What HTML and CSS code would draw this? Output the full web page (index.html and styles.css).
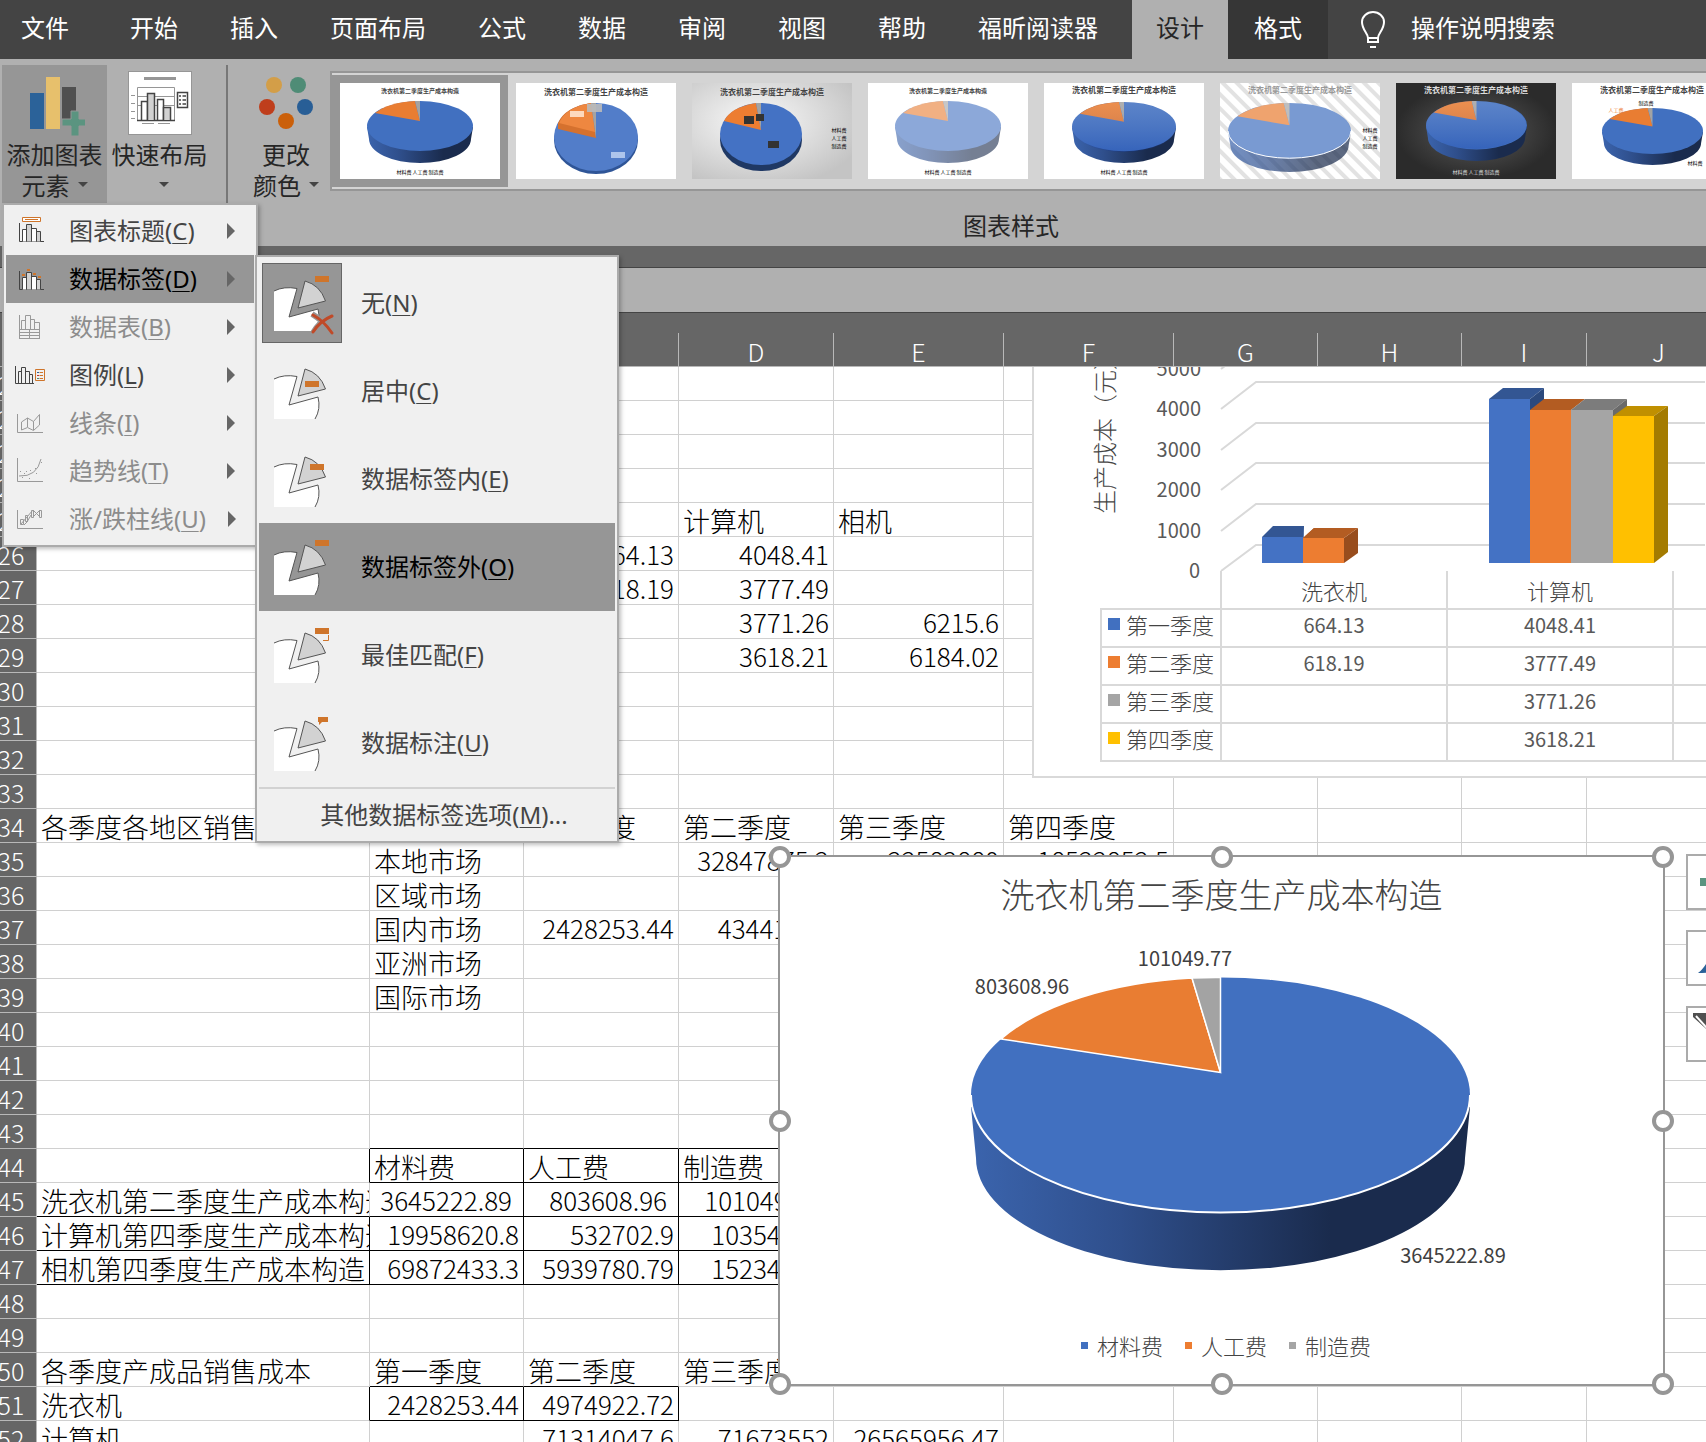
FILE: index.html
```html
<!DOCTYPE html>
<html lang="zh-CN">
<head>
<meta charset="utf-8">
<title>生产成本 - 图表设计</title>
<link rel="stylesheet" href="styles.css">
</head>
<body>
<svg class="defs" aria-hidden="true">
  <defs>
    <linearGradient id="wall"><stop offset="0" stop-color="#3b64ad"/><stop offset=".3" stop-color="#2f4f8c"/><stop offset=".72" stop-color="#1a2b4d"/><stop offset="1" stop-color="#1a2b4d"/></linearGradient>
    <linearGradient id="shade" x2="0" y2="1"><stop offset="0" stop-color="#fff" stop-opacity=".14"/><stop offset="1" stop-color="#0028a0" stop-opacity=".18"/></linearGradient>
    <radialGradient id="dark"><stop offset="0" stop-color="#5c5c5c"/><stop offset="1" stop-color="#2b2b2b"/></radialGradient>
    <radialGradient id="light" cx=".4" cy=".4" r=".7"><stop offset="0" stop-color="#fafafa"/><stop offset="1" stop-color="#c4c4c4"/></radialGradient>
    <pattern id="stripe" width="10" height="10" patternUnits="userSpaceOnUse" patternTransform="rotate(-45)"><rect width="10" height="10" fill="#fff"/><rect width="4" height="10" fill="#e2e2e2"/></pattern>
    <symbol id="pie" viewBox="0 0 106 62" preserveAspectRatio="none">
      <path d="M0 26 2 38A51 24 0 0 0 104 38L106 26Z" fill="url(#wall)"/>
      <ellipse cx="53" cy="25" rx="53" ry="25" fill="#4170c0"/>
      <path d="M53 20 8 12A53 25 0 0 1 48 0Z" fill="#e97d32"/>
      <path d="M53 20 48 0H53Z" fill="#a3a3a3"/>
    </symbol>
    <symbol id="bars" viewBox="0 0 32 32">
      <path d="M4.5 8V26.5H29" fill="none" stroke="currentColor"/>
      <g stroke="currentColor"><path d="M7.500 26.500V14.500H11.500V26.500M16.500 26.500V13.500H21.500V26.500" fill="#fff"/><path d="M11.500 26.500V9.500H16.500V26.500M21.500 26.500V16.500H25.500V26.500" fill="#d2d2d2"/></g>
    </symbol>
    <symbol id="slices" viewBox="0 0 64 64">
      <path d="M4 20Q14 15 27 17.500L19 46 48 38Q51 50 45 60H4Z" fill="#fff"/>
      <path d="M4 20Q14 15 27 17.500L19 46 48 38Q51 50 45 60" fill="none" stroke="#555"/>
      <path d="M35 10Q50 14 55.500 30L28 37Z" fill="#d2d2d2" stroke="#555"/>
    </symbol>
  </defs>
</svg>
<div class="app">
  <nav class="tabs">
    <button class="tab tab-file">文件</button><button class="tab">开始</button><button class="tab">插入</button><button class="tab">页面布局</button><button class="tab">公式</button><button class="tab">数据</button><button class="tab">审阅</button><button class="tab">视图</button><button class="tab">帮助</button><button class="tab">福昕阅读器</button><button class="tab tab-active">设计</button><button class="tab tab-context">格式</button>
    <button class="tell"><svg width="24" height="38" viewBox="0 0 24 38" fill="none" stroke="#fff" stroke-width="2"><path d="M7 31V27C7 22 1 19 1 11A11 10 0 0 1 23 11C23 19 17 22 17 27V31ZM7 27H17M9 36H15"/></svg><span>操作说明搜索</span></button>
  </nav>

  <section class="ribbon">
    <div class="group">
      <button class="tool tool-open">
        <svg width="60" height="68" viewBox="0 0 60 68"><path d="M5 22H19V58H5Z" fill="#2b6299"/><path d="M21 6H35V58H21Z" fill="#e7c06c"/><path d="M37 16H51V48H37Z" fill="#505050"/><path d="M37 48H46V40H54V48H62V55H54V65H46V55H37Z" fill="#5b9480" stroke="#969696"/></svg>
        <span>添加图表</span><span class="drop">元素<i class="caret"></i></span>
      </button>
      <button class="tool">
        <svg width="64" height="68" viewBox="0 0 64 68"><rect x=".5" y=".5" width="63" height="63" fill="#fff" stroke="#969696"/><path d="M16 7.500H48" stroke="#969696" stroke-width="3"/><path d="M9.500 16.500H46.500V49M9.500 16.500V49M3 24.500H7M3 32.500H7M3 40.500H7M3 47.500H7M9.500 25.500H46M9.500 34.500H46M14 52.500H26M30 52.500H42" stroke="#969696" fill="none"/><path d="M9 49.500H47M13.500 49V30.500H19.500V49M29.500 49V28.500H35.500V49" fill="#fff" stroke="#444" stroke-width="1.500"/><path d="M19.500 49V22.500H26.500V49M35.500 49V36.500H42.500V49" fill="#d2d2d2" stroke="#444" stroke-width="1.500"/><path d="M49.500 21.500H59.500V36.500H49.500Z" fill="#fff" stroke="#444" stroke-width="1.500"/><path d="M51 25H53M54.500 25H58M51 29H53M54.500 29H58M51 33H53M54.500 33H58" stroke="#444" stroke-width="1.500"/></svg>
        <span>快速布局</span><span class="drop"><i></i><i class="caret"></i></span>
      </button>
    </div>
    <div class="group group-color">
      <button class="tool">
        <svg width="64" height="68" viewBox="0 0 64 68"><circle cx="20" cy="14" r="8" fill="#d39e48"/><circle cx="44" cy="14" r="8" fill="#4f8c76"/><circle cx="13" cy="36" r="8" fill="#bf3e1c"/><circle cx="51" cy="36" r="8" fill="#285e96"/><circle cx="32" cy="50" r="8" fill="#cb600a"/></svg>
        <span>更改</span><span class="drop">颜色<i class="caret"></i></span>
      </button>
    </div>
    <div class="styles">
      <div class="gallery">
        <button class="thumb thumb-on" aria-label="样式 1"><svg width="160" height="96"><rect width="160" height="96" fill="#fff"/><text x="80" y="10" class="cap cap-s">洗衣机第二季度生产成本构造</text><use href="#pie" x="27" y="18" width="106" height="62"/><text x="80" y="91" class="key">材料费 人工费 制造费</text></svg></button>
        <button class="thumb" aria-label="样式 2"><svg width="160" height="96"><rect width="160" height="96" fill="#fff"/><text x="80" y="12" class="cap">洗衣机第二季度生产成本构造</text><ellipse cx="80" cy="57" rx="42" ry="34" fill="#2f5597"/><ellipse cx="80" cy="54" rx="42" ry="34" fill="#527dc9"/><path d="M80 55 42 46V40Q49 24 75 20Z" fill="#d5712e"/><path d="M79 49 43 40Q50 24 75 20Z" fill="#ee8740"/><path d="M80 55 75 20H80Z" fill="#a3a3a3"/><g class="tag"><rect x="54" y="28" width="14" height="6" fill="#ffe2cc"/><rect x="71" y="21" width="15" height="8" fill="#bbb"/><rect x="95" y="69" width="14" height="6" fill="#b9cdf0"/></g></svg></button>
        <button class="thumb" aria-label="样式 3"><svg width="160" height="96"><rect width="160" height="96" fill="url(#light)"/><text x="80" y="12" class="cap">洗衣机第二季度生产成本构造</text><ellipse cx="69" cy="57" rx="41" ry="31" fill="#1f3864"/><ellipse cx="69" cy="51" rx="41" ry="31" fill="#4472c4"/><path d="M69 47 32 38Q39 24 64 20Z" fill="#ed7d31"/><path d="M69 47 64 20H69Z" fill="#a3a3a3"/><path d="M52 33H62V41H52ZM64 31H72V38H64ZM76 58H87V65H76Z" fill="#333"/><text x="147" y="49" class="key">材料费</text><text x="147" y="57" class="key">人工费</text><text x="147" y="65" class="key">制造费</text></svg></button>
        <button class="thumb" aria-label="样式 4"><svg width="160" height="96"><rect width="160" height="96" fill="#fff"/><text x="80" y="10" class="cap cap-s">洗衣机第二季度生产成本构造</text><use href="#pie" x="27" y="18" width="106" height="62" opacity=".6"/><text x="80" y="91" class="key">材料费 人工费 制造费</text></svg></button>
        <button class="thumb" aria-label="样式 5"><svg width="160" height="96"><rect width="160" height="96" fill="#fff"/><text x="80" y="10" class="cap">洗衣机第二季度生产成本构造</text><use href="#pie" x="28" y="19" width="104" height="61"/><ellipse cx="80" cy="44" rx="52" ry="25" fill="url(#shade)"/><text x="80" y="91" class="key">材料费 人工费 制造费</text></svg></button>
        <button class="thumb" aria-label="样式 6"><svg width="160" height="96"><rect width="160" height="96" fill="url(#stripe)"/><text x="80" y="10" class="cap cap-g">洗衣机第二季度生产成本构造</text><ellipse cx="69" cy="47" rx="61" ry="27" fill="#fff"/><use href="#pie" x="8" y="20" width="123" height="69" opacity=".7"/><path d="M8 48A61 27 0 0 0 131 48" fill="none" stroke="#fff"/><text x="150" y="49" class="key">材料费</text><text x="150" y="57" class="key">人工费</text><text x="150" y="65" class="key">制造费</text></svg></button>
        <button class="thumb" aria-label="样式 7"><svg width="160" height="96"><rect width="160" height="96" fill="url(#dark)"/><text x="80" y="10" class="cap cap-w">洗衣机第二季度生产成本构造</text><use href="#pie" x="30" y="18" width="101" height="60"/><ellipse cx="80" cy="42" rx="50" ry="24" fill="url(#shade)"/><text x="80" y="91" class="key cap-w">材料费 人工费 制造费</text></svg></button>
        <button class="thumb" aria-label="样式 8"><svg width="160" height="96"><rect width="160" height="96" fill="#fff"/><text x="80" y="10" class="cap">洗衣机第二季度生产成本构造</text><text x="74" y="22" class="key">制造费</text><text x="44" y="29" class="key" fill="#ed7d31">人工费</text><use href="#pie" x="30" y="25" width="101" height="57"/><text x="123" y="82" class="key">材料费</text></svg></button>
      </div>
      <div class="group-name">图表样式</div>
    </div>
  </section>

  <div class="formula"></div>

  <main class="sheet">
    <table class="grid">
      <colgroup><col class="c-n"><col class="c-a"><col class="c-b"><col class="c-c"><col class="c-c"><col class="c-e"><col class="c-e"><col class="c-g"><col class="c-g"><col class="c-i"><col class="c-g"></colgroup>
      <thead><tr><th></th><th>A</th><th>B</th><th>C</th><th>D</th><th>E</th><th>F</th><th>G</th><th>H</th><th>I</th><th>J</th></tr></thead>
      <tbody>
      <tr><th>21</th><td></td><td></td><td></td><td></td><td></td><td></td><td></td><td></td><td></td><td></td></tr>
      <tr><th>22</th><td></td><td></td><td></td><td></td><td></td><td></td><td></td><td></td><td></td><td></td></tr>
      <tr><th>23</th><td></td><td></td><td></td><td></td><td></td><td></td><td></td><td></td><td></td><td></td></tr>
      <tr><th>24</th><td></td><td></td><td></td><td></td><td></td><td></td><td></td><td></td><td></td><td></td></tr>
      <tr><th>25</th><td></td><td></td><td>洗衣机</td><td>计算机</td><td>相机</td><td></td><td></td><td></td><td></td><td></td></tr>
      <tr><th>26</th><td></td><td></td><td class="n">664.13</td><td class="n">4048.41</td><td></td><td></td><td></td><td></td><td></td><td></td></tr>
      <tr><th>27</th><td></td><td></td><td class="n">618.19</td><td class="n">3777.49</td><td></td><td></td><td></td><td></td><td></td><td></td></tr>
      <tr><th>28</th><td></td><td></td><td></td><td class="n">3771.26</td><td class="n">6215.6</td><td></td><td></td><td></td><td></td><td></td></tr>
      <tr><th>29</th><td></td><td></td><td></td><td class="n">3618.21</td><td class="n">6184.02</td><td></td><td></td><td></td><td></td><td></td></tr>
      <tr><th>30</th><td></td><td></td><td></td><td></td><td></td><td></td><td></td><td></td><td></td><td></td></tr>
      <tr><th>31</th><td></td><td></td><td></td><td></td><td></td><td></td><td></td><td></td><td></td><td></td></tr>
      <tr><th>32</th><td></td><td></td><td></td><td></td><td></td><td></td><td></td><td></td><td></td><td></td></tr>
      <tr><th>33</th><td></td><td></td><td></td><td></td><td></td><td></td><td></td><td></td><td></td><td></td></tr>
      <tr><th>34</th><td>各季度各地区销售</td><td></td><td>第一季度</td><td>第二季度</td><td>第三季度</td><td>第四季度</td><td></td><td></td><td></td><td></td></tr>
      <tr><th>35</th><td></td><td>本地市场</td><td></td><td class="n">32847875.2</td><td class="n">22582880</td><td class="n">18522852.5</td><td></td><td></td><td></td><td></td></tr>
      <tr><th>36</th><td></td><td>区域市场</td><td></td><td></td><td></td><td></td><td></td><td></td><td></td><td></td></tr>
      <tr><th>37</th><td></td><td>国内市场</td><td class="n">2428253.44</td><td class="n">43441280</td><td></td><td></td><td></td><td></td><td></td><td></td></tr>
      <tr><th>38</th><td></td><td>亚洲市场</td><td></td><td></td><td></td><td></td><td></td><td></td><td></td><td></td></tr>
      <tr><th>39</th><td></td><td>国际市场</td><td></td><td></td><td></td><td></td><td></td><td></td><td></td><td></td></tr>
      <tr><th>40</th><td></td><td></td><td></td><td></td><td></td><td></td><td></td><td></td><td></td><td></td></tr>
      <tr><th>41</th><td></td><td></td><td></td><td></td><td></td><td></td><td></td><td></td><td></td><td></td></tr>
      <tr><th>42</th><td></td><td></td><td></td><td></td><td></td><td></td><td></td><td></td><td></td><td></td></tr>
      <tr><th>43</th><td></td><td class="kb"></td><td class="kb"></td><td class="kb"></td><td></td><td></td><td></td><td></td><td></td><td></td></tr>
      <tr><th>44</th><td class="kr"></td><td class="kb kr">材料费</td><td class="kb kr">人工费</td><td class="kb kr">制造费</td><td></td><td></td><td></td><td></td><td></td><td></td></tr>
      <tr><th>45</th><td class="kb">洗衣机第二季度生产成本构造</td><td class="n acc kb kr">3645222.89</td><td class="n acc kb kr">803608.96</td><td class="n acc kb kr">101049.77</td><td></td><td></td><td></td><td></td><td></td><td></td></tr>
      <tr><th>46</th><td class="kb kr">计算机第四季度生产成本构造</td><td class="n kb kr">19958620.8</td><td class="n kb kr">532702.9</td><td class="n kb kr">1035412.5</td><td></td><td></td><td></td><td></td><td></td><td></td></tr>
      <tr><th>47</th><td class="kb kr">相机第四季度生产成本构造</td><td class="n kb kr">69872433.3</td><td class="n kb kr">5939780.79</td><td class="n kb kr">1523418.6</td><td></td><td></td><td></td><td></td><td></td><td></td></tr>
      <tr><th>48</th><td></td><td></td><td></td><td></td><td></td><td></td><td></td><td></td><td></td><td></td></tr>
      <tr><th>49</th><td></td><td></td><td></td><td></td><td></td><td></td><td></td><td></td><td></td><td></td></tr>
      <tr><th>50</th><td>各季度产成品销售成本</td><td class="kb">第一季度</td><td class="kb">第二季度</td><td>第三季度</td><td></td><td></td><td></td><td></td><td></td><td></td></tr>
      <tr><th>51</th><td class="kr">洗衣机</td><td class="n kb kr">2428253.44</td><td class="n kb kr">4974922.72</td><td></td><td></td><td></td><td></td><td></td><td></td><td></td></tr>
      <tr><th>52</th><td>计算机</td><td></td><td class="n">71314047.6</td><td class="n">71673552</td><td class="n">26565956.47</td><td></td><td></td><td></td><td></td><td></td></tr>
      </tbody>
    </table>

    <figure class="chart chart-bar">
      <svg class="plot" width="671" height="204" viewBox="-1 1 671 204">
        <g fill="none" stroke="#d9d9d9" stroke-width="2"><path d="M186 3 190 0M186 43 221 16H680M186 84 221 57H680M186 124 221 97H680M186 165 221 138H680M186 205 221 179H680"/></g>
        <g class="axis"><text x="166" y="10">5000</text><text x="166" y="50">4000</text><text x="166" y="91">3000</text><text x="166" y="131">2000</text><text x="166" y="172">1000</text></g>
        <text class="axis-title" transform="rotate(-90 79 148)" x="79" y="148">生产成本（元）</text>
        <path d="M227 171 238 160H269L268 197H227Z" fill="#335693"/><path d="M227 171H268V197H227Z" fill="#4472c4"/>
        <path d="M268 172 279 162H310L309 172Z" fill="#b35c22"/><path d="M309 172 323 162V187L309 197Z" fill="#984d1d"/><path d="M279 162H323L309 172H268Z" fill="#b35c22"/><path d="M268 172H309V197H268Z" fill="#ed7d31"/>
        <path d="M454 33 468 22H509L495 33Z" fill="#335693"/><path d="M495 33 509 22V44H495Z" fill="#2b497d"/><path d="M454 33H495V197H454Z" fill="#4472c4"/>
        <path d="M495 44 509 33H550L536 44Z" fill="#b35c22"/><path d="M495 44H536V197H495Z" fill="#ed7d31"/>
        <path d="M536 44 550 33H592L578 44Z" fill="#7c7c7c"/><path d="M578 44 592 33V50H578Z" fill="#6a6a6a"/><path d="M536 44H578V197H536Z" fill="#a5a5a5"/>
        <path d="M578 50 592 40H633L619 50Z" fill="#c09000"/><path d="M619 50 633 40V186L619 197Z" fill="#a47b00"/><path d="M578 50H619V197H578Z" fill="#ffc000"/>
      </svg>
      <span class="zero">0</span>
      <table class="data">
        <colgroup><col class="d-k"><col class="d-v"><col class="d-v"><col class="d-v"></colgroup>
        <tr><th class="blank"></th><th>洗衣机</th><th>计算机</th><th></th></tr>
        <tr><th><span class="series"><i class="sw blue"></i>第一季度</span></th><td>664.13</td><td>4048.41</td><td></td></tr>
        <tr><th><span class="series"><i class="sw orange"></i>第二季度</span></th><td>618.19</td><td>3777.49</td><td></td></tr>
        <tr><th><span class="series"><i class="sw gray"></i>第三季度</span></th><td></td><td>3771.26</td><td></td></tr>
        <tr><th><span class="series"><i class="sw yellow"></i>第四季度</span></th><td></td><td>3618.21</td><td></td></tr>
      </table>
    </figure>

    <figure class="chart chart-pie">
      <figcaption>洗衣机第二季度生产成本构造</figcaption>
      <svg width="882" height="412" viewBox="0 0 882 412">
        <path d="M191 190 196 241A244 112 0 0 0 685 241L690 190Z" fill="url(#wall)"/>
        <ellipse cx="440.500" cy="178" rx="249.500" ry="117.500" fill="#4170c0"/>
        <path d="M191 178A249.500 117.500 0 0 0 690 178" fill="none" stroke="#fff" stroke-width="2"/>
        <path d="M440.500 155.500 221 122A249.500 117.500 0 0 1 412 61Z" fill="#e97d32" stroke="#fff" stroke-width="1.500"/>
        <path d="M440.500 155.500 412 61A249.500 117.500 0 0 1 440.500 60.500Z" fill="#a3a3a3" stroke="#fff" stroke-width="1.500"/>
        <g class="value"><text x="405" y="49">101049.77</text><text x="242" y="77">803608.96</text><text x="673" y="346">3645222.89</text></g>
      </svg>
      <div class="legend"><span><i class="dot blue"></i>材料费</span><span><i class="dot orange"></i>人工费</span><span><i class="dot gray"></i>制造费</span></div>
      <i class="grip g1"></i><i class="grip g2"></i><i class="grip g3"></i><i class="grip g4"></i><i class="grip g5"></i><i class="grip g6"></i><i class="grip g7"></i><i class="grip g8"></i>
    </figure>

    <div class="side">
      <button aria-label="图表元素"><svg width="40" height="52"><path d="M12 22H24V10H32V22H40V30H12Z" fill="#5b9480"/></svg></button>
      <button aria-label="图表样式"><svg width="40" height="52"><path d="M10 41C18 36 18 26 30 24L34 34C28 40 20 41 10 41Z" fill="#2b6299"/></svg></button>
      <button aria-label="图表筛选器"><svg width="40" height="52"><path d="M5 5H40V46L26 30V28L5 9Z" fill="#505050"/><path d="M8 8 28 30" stroke="#fff" stroke-width="2"/></svg></button>
    </div>
  </main>

  <div class="menu menu-main" role="menu">
    <button class="item"><svg class="ico" viewBox="0 0 32 32"><use href="#bars"/><path d="M7.500 2.500H25.500V6.500H7.500ZM10 4.500H23" fill="#fff" stroke="#cf752b"/></svg><span class="label">图表标题(<u>C</u>)</span></button>
    <button class="item item-on"><svg class="ico" viewBox="0 0 32 32"><use href="#bars"/><path d="M7 11H10V13H7ZM12 6H15V8H12ZM18 10H21V12H18ZM23 13H26V15H23Z" fill="#cf752b"/></svg><span class="label">数据标签(<u>D</u>)</span></button>
    <button class="item" disabled><svg class="ico" viewBox="0 0 32 32" fill="none" stroke="currentColor"><path d="M4.500 4V28M6.500 18V9.500H10.500V18M10.500 18V4.500H15.500V18M15.500 18V8.500H19.500V18M19.500 18V11.500H24.500V28M4 18.500H25M4 21.500H25M4 24.500H25M4 27.500H25M14.500 19V28"/></svg><span class="label">数据表(<u>B</u>)</span></button>
    <button class="item"><svg class="ico" viewBox="0 0 32 32" fill="none" stroke="#444"><path d="M.5 7V24.500H19M3.500 24V12.500H6.500V24M6.500 24V8.500H10.500V24M10.500 24V12.500H14.500V24M14.500 24V15.500H17.500V24"/><path d="M20.500 10.500H29.500V21.500H20.500ZM24.500 13.500H28M24.500 16.500H28M24.500 19.500H28" stroke="#cf752b"/><path d="M22 13.500H24" stroke="#2b6299"/><path d="M22 16.500H24" stroke="#b33"/><path d="M22 19.500H24" stroke="#4f8c76"/></svg><span class="label">图例(<u>L</u>)</span></button>
    <button class="item" disabled><svg class="ico" viewBox="0 0 32 32" fill="none" stroke="currentColor"><path d="M2.500 7V25.500H28M6.500 23V15L12.500 11 18.500 14.500 24.500 7.500V18L18.500 23.500 12.500 20.500ZM12.500 11V20M18.500 14.500V23"/></svg><span class="label">线条(<u>I</u>)</span></button>
    <button class="item" disabled><svg class="ico" viewBox="0 0 32 32" fill="none" stroke="currentColor"><path d="M2.500 3V26.500H28M4 21Q22 22 26 4M5 16.500H6M9 18.500H10M11 16.500H12M15 15.500H16M20 13.500H21M14 23.500H15M21 18.500H22M26 7.500H27M7 22.500H8"/></svg><span class="label">趋势线(<u>T</u>)</span></button>
    <button class="item" disabled><svg class="ico" viewBox="0 0 32 32" fill="none" stroke="currentColor"><path d="M2.500 7V25.500H28M5.500 21.500V16.500H8.500V21.500ZM10.500 18.500V12.500H12.500V18.500ZM16.500 14.500V7.500H18.500V14.500ZM24.500 14.500V7.500H26.500V14.500ZM6 21 18 7M9 22 12 19 16 12M18 7 25 14M18 14 25 7"/></svg><span class="label">涨/跌柱线(<u>U</u>)</span></button>
  </div>

  <div class="menu menu-sub" role="menu">
    <button class="opt"><span class="pic pic-on"><svg width="64" height="64"><use href="#slices"/><path d="M45 5H59V11H45Z" fill="#cf752b"/><path d="M42 43Q54 50 62 62M43 62Q50 50 62 45" fill="none" stroke="#969696" stroke-width="6"/><path d="M43 44Q54 50 62 62M43 61Q50 50 62 45" fill="none" stroke="#c04a28" stroke-width="3" stroke-linecap="round"/></svg></span><span class="label">无(<u>N</u>)</span></button>
    <button class="opt"><span class="pic"><svg width="64" height="64"><use href="#slices"/><path d="M35 22H49V28H35Z" fill="#cf752b"/></svg></span><span class="label">居中(<u>C</u>)</span></button>
    <button class="opt"><span class="pic"><svg width="64" height="64"><use href="#slices"/><path d="M40 17H54V23H40Z" fill="#cf752b"/></svg></span><span class="label">数据标签内(<u>E</u>)</span></button>
    <button class="opt item-on"><span class="pic"><svg width="64" height="64"><use href="#slices"/><path d="M45 5H59V11H45Z" fill="#cf752b"/></svg></span><span class="label">数据标签外(<u>O</u>)</span></button>
    <button class="opt"><span class="pic"><svg width="64" height="64"><use href="#slices"/><path d="M45 5H59V11H45Z" fill="#cf752b"/><path d="M58.500 12V17.500H53" fill="none" stroke="#cf752b"/></svg></span><span class="label">最佳匹配(<u>F</u>)</span></button>
    <button class="opt"><span class="pic"><svg width="64" height="64"><use href="#slices"/><path d="M48 6H58V11H52L49 14V11H48Z" fill="#cf752b"/></svg></span><span class="label">数据标注(<u>U</u>)</span></button>
    <button class="more">其他数据标签选项(<u>M</u>)...</button>
  </div>
</div>
</body>
</html>
```
FILE: styles.css
```css
* { box-sizing: border-box; }
body { margin: 0; font-family: "Noto Sans CJK SC", sans-serif; font-size: 24px; color: #262626; background: #666; }
button { font: inherit; color: inherit; border: 0; padding: 0; background: none; white-space: nowrap; }
i { font-style: normal; }
figure { margin: 0; }
svg { display: block; flex: none; }
u { text-decoration-thickness: 1px; text-underline-offset: 3px; }
.defs { position: absolute; width: 0; height: 0; }

.app { position: relative; display: flex; flex-direction: column; height: 100vh; overflow: hidden; }

.tabs { display: flex; flex: none; height: 59px; background: #444; color: #fff; overflow: hidden; }
.tab { flex: none; padding: 0 26px 6px; }
.tab-file { padding-left: 21px; padding-right: 35px; }
.tab-active { margin-left: 8px; padding-left: 24px; padding-right: 24px; background: #b0b0b0; color: #262626; }
.tab-context { background: #363636; }
.tell { display: flex; flex: none; align-items: center; gap: 26px; padding: 0 0 6px 33px; }
.tell svg { margin-top: 6px; }

.ribbon { display: flex; flex: none; height: 187px; padding-top: 6px; background: #b0b0b0; overflow: hidden; }
.group { display: flex; flex: none; height: 138px; padding: 0 14px 0 2px; border-right: 2px solid #777; }
.group-color { padding: 0 0 0 14px; border: 0; }
.tool { display: flex; flex-direction: column; align-items: center; width: 105px; height: 138px; padding-top: 6px; line-height: 31px; }
.tool svg { margin-bottom: -1px; }
.group-color .tool { width: 88px; }
.tool-open { background: #969696; }
.drop { display: flex; align-items: center; justify-content: center; gap: 8px; height: 31px; }
.caret { border: 5px solid transparent; border-top-color: #444; border-bottom: 0; }
.styles { flex: 1; min-width: 0; padding-top: 6px; }
.gallery { display: flex; height: 120px; padding: 2px 0; border: 2px solid #969696; border-right: 0; background: #d4d4d4; overflow: hidden; }
.thumb { flex: none; width: 176px; height: 112px; padding: 8px; }
.thumb-on { background: #969696; }
.cap { font-size: 8px; font-weight: 700; text-anchor: middle; fill: #444; }
.cap-s { font-size: 6px; }
.cap-g { fill: #999; }
.cap-w { fill: #ddd; }
.key { font-size: 5px; text-anchor: middle; }
.tag { opacity: .9; }
.group-name { margin-top: 17px; padding-right: 14px; line-height: 34px; text-align: center; }

.formula { flex: none; height: 46px; margin: 21px 0 20px; border: solid #444; border-width: 1px 0; background: #b0b0b0; }

.sheet { position: relative; flex: 1; min-height: 0; overflow: hidden; background: #fff; }
.grid { table-layout: fixed; width: 1745px; margin-left: -14px; border-collapse: separate; border-spacing: 0; font-weight: 300; color: #000; }
.c-n { width: 51px; } .c-a { width: 333px; } .c-b { width: 154px; } .c-c { width: 155px; }
.c-e { width: 170px; } .c-g { width: 144px; } .c-i { width: 125px; }
.grid th { height: 34px; padding: 2px 0 0; border: solid #b8b8b8; border-width: 0 1px 1px 0; background: #666; color: #fff; font-size: 25px; font-weight: 300; line-height: 31px; }
.grid thead th { height: 34px; line-height: 30px; }
.grid td { height: 34px; padding: 2px 4px 0; border: solid #d0d0d0; border-width: 0 1px 1px 0; font-size: 27px; line-height: 31px; white-space: nowrap; overflow: hidden; }
.grid .n { padding-top: 0; font-size: 26px; text-align: right; }
.grid .acc { padding-right: 11px; }
.grid .kb { border-bottom-color: #000; }
.grid .kr { border-right-color: #000; }

.chart { position: absolute; background: #fff; }
.chart-bar { left: 1032px; right: 0; top: 34px; height: 411px; border: solid #d9d9d9; border-width: 0 0 2px 2px; font-size: 20px; color: #595959; overflow: hidden; }
.axis text { font-size: 20px; text-anchor: end; fill: #595959; }
.axis-title { font-size: 24px; font-weight: 300; fill: #444; }
.zero { position: absolute; left: 155px; top: 188px; line-height: 30px; }
.data { table-layout: fixed; width: 800px; margin-left: 66px; border-collapse: collapse; }
.d-k { width: 120px; } .d-v { width: 226px; }
.data th, .data td { height: 38px; padding: 0 0 6px; border: 2px solid #d9d9d9; line-height: 30px; text-align: center; font-weight: 400; white-space: nowrap; }
.data th { padding-bottom: 8px; font-size: 22px; line-height: 28px; font-weight: 300; color: #444; }
.data tr:first-child th { padding: 0; border-top: 0; }
.data .blank { border-left: 0; }
.series { display: flex; align-items: center; justify-content: center; gap: 6px; }
.sw { width: 12px; height: 12px; }
.blue { background: #4170c0; } .orange { background: #ed7d31; } .gray { background: #a5a5a5; } .yellow { background: #ffc000; }

.chart-pie { left: 778px; top: 522px; width: 887px; padding-top: 16px; border: 2px solid #969696; height: 531px; }
.chart-pie figcaption { height: 44px; line-height: 42px; font-size: 34px; font-weight: 300; color: #444; text-align: center; }
.value text { font-size: 20px; text-anchor: middle; fill: #404040; }
.legend { display: flex; justify-content: center; gap: 22px; padding-left: 9px; font-size: 22px; font-weight: 300; line-height: 32px; color: #444; }
.legend span { display: flex; align-items: center; gap: 9px; }
.dot { width: 7px; height: 7px; }
.grip { position: absolute; width: 22px; height: 22px; margin: -11px; border: 4px solid #969696; border-radius: 50%; background: #fff; }
.g1, .g4, .g6 { left: 0; } .g2, .g7 { left: 50%; } .g3, .g5, .g8 { left: 100%; }
.g1, .g2, .g3 { top: 0; } .g4, .g5 { top: 50%; } .g6, .g7, .g8 { top: 100%; }

.side { position: absolute; left: 1686px; top: 521px; display: flex; flex-direction: column; gap: 20px; }
.side button { width: 56px; height: 56px; border: 2px solid #ababab; background: #fff; }

.menu { position: absolute; padding: 2px; border: 2px solid #ababab; background: #f0f0f0; box-shadow: 2px 2px 4px rgba(0, 0, 0, .25); font-family: "Noto Sans", "Noto Sans CJK SC", sans-serif; color: #444; }
.menu-main { left: 2px; top: 203px; width: 256px; }
.menu-sub { left: 255px; top: 255px; width: 364px; }
.item { display: flex; align-items: center; gap: 22px; width: 100%; height: 48px; padding-left: 9px; padding-right: 19px; }
.item::after { content: ""; margin-left: auto; border: 8px solid transparent; border-left-color: #666; border-right: 0; }
.item:disabled { color: #8c8c8c; }
.label { padding-bottom: 3px; }
.ico { width: 32px; height: 32px; overflow: visible; }
.item .ico { color: #444; }
.item:disabled .ico { color: #999; }
.item-on { background: #969696; color: #000; }
.opt { display: flex; align-items: center; gap: 19px; width: 100%; height: 88px; padding-left: 3px; }
.pic { padding: 8px; }
.pic-on { background: #969696; box-shadow: inset 0 0 0 1px #666; }
.more { display: block; width: 100%; height: 52px; padding: 0 0 2px 14px; border-top: 2px solid #d2d2d2; }
```
